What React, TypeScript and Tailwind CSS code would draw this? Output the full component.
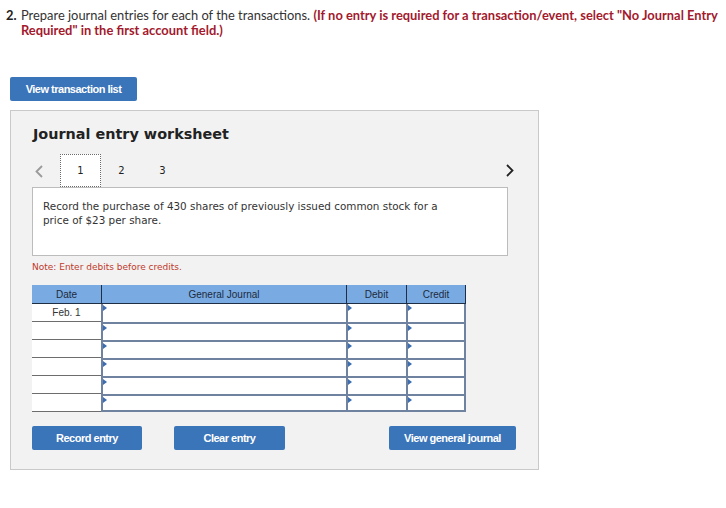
import React from "react";

const rows = ["Feb. 1", "", "", "", "", ""];

function Marker() {
  return (
    <span className="absolute left-0 top-[1px] w-0 h-0 border-y-[3px] border-y-transparent border-l-[4px] border-l-[#3b6db0]" />
  );
}

function Chevron({ dir, color }: { dir: "left" | "right"; color: string }) {
  return (
    <svg width="8" height="13" viewBox="0 0 8 13" fill="none" stroke={color} strokeWidth="1.8">
      {dir === "left" ? <polyline points="7,1 1.5,6.5 7,12" /> : <polyline points="1,1 6.5,6.5 1,12" />}
    </svg>
  );
}

export default function App() {
  return (
    <div className="w-[726px] h-[508px] bg-white overflow-hidden [font-family:'Lato',sans-serif]">
      {/* Instructions */}
      <div className="flex pt-[8px] pl-[6px] text-[12.9px] leading-[15px] text-[#333]">
        <span className="w-[15px] font-bold text-[#222]">2.</span>
        <p className="whitespace-nowrap">
          Prepare journal entries for each of the transactions.{" "}
          <span className="font-bold text-[#a3192d]">
            (If no entry is required for a transaction/event, select "No Journal Entry
            <br />
            Required" in the first account field.)
          </span>
        </p>
      </div>

      <button className="mt-[39px] ml-[10px] w-[127px] h-[24px] rounded-[2px] bg-[#3a74b9] text-white text-[11px] font-bold tracking-[-0.5px] [font-family:'Liberation_Sans',Arial,sans-serif]">
        View transaction list
      </button>

      {/* Worksheet panel */}
      <div className="mt-[9px] ml-[10px] w-[529px] h-[360px] border border-[#c9c9c9] bg-[#f2f2f2] [font-family:'DejaVu_Sans',Verdana,sans-serif]">
        <h2 className="pt-[13px] pl-[22px] text-[14.4px] leading-[20px] font-bold text-[#222]">
          Journal entry worksheet
        </h2>

        <div className="mt-[10px] ml-[21px] w-[476px]">
          <div className="flex items-end h-[33px]">
            <span className="w-[28px] pl-[3px] pb-[9px]">
              <Chevron dir="left" color="#9a9a9a" />
            </span>
            <div className="w-[41px] h-[33px] border border-dotted border-[#6b6b6b] bg-white flex items-center justify-center text-[10px] text-[#222]">
              1
            </div>
            <div className="w-[41px] h-[33px] flex items-center justify-center text-[10px] text-[#222]">2</div>
            <div className="w-[41px] h-[33px] flex items-center justify-center text-[10px] text-[#222]">3</div>
            <span className="ml-auto mr-[-6px] pb-[10px]">
              <Chevron dir="right" color="#222" />
            </span>
          </div>

          <div className="h-[69px] border border-[#bcbcbc] bg-white pt-[11px] pl-[10px] text-[10.4px] leading-[14px] text-[#333]">
            Record the purchase of 430 shares of previously issued common stock for a
            <br />
            price of $23 per share.
          </div>

          <p className="mt-[5px] text-[9px] leading-[12px] text-[#c0392b]">Note: Enter debits before credits.</p>

          {/* Journal table */}
          <div className="mt-[12px] w-[434px] [font-family:'Liberation_Sans',Arial,sans-serif]">
            <div className="grid grid-cols-[69px_245px_60px_60px] h-[19px] bg-[#79aae1] border-b border-[#1e2e44] text-[10px] text-[#1c2b40]">
              <div className="flex items-center justify-center">Date</div>
              <div className="flex items-center justify-center border-l border-[#1e2e44]">General Journal</div>
              <div className="flex items-center justify-center border-l border-[#1e2e44]">Debit</div>
              <div className="flex items-center justify-center border-l border-r border-[#1e2e44]">Credit</div>
            </div>
            {rows.map((d, i) => (
              <div key={i} className="grid grid-cols-[69px_245px_60px_60px] h-[18px]">
                <div className="bg-white border-b border-[#6d6d6d] flex items-center justify-center text-[10px] text-[#333]">
                  {d}
                </div>
                <div
                  className={`relative bg-white border-l-2 border-[#6f83a1] ${i > 0 ? "border-t-2" : ""} ${
                    i === rows.length - 1 ? "border-b-2" : ""
                  }`}
                >
                  <Marker />
                </div>
                <div
                  className={`relative bg-white border-l-2 border-[#6f83a1] ${i > 0 ? "border-t-2" : ""} ${
                    i === rows.length - 1 ? "border-b-2" : ""
                  }`}
                >
                  <Marker />
                </div>
                <div
                  className={`relative bg-white border-l-2 border-r-2 border-[#6f83a1] ${i > 0 ? "border-t-2" : ""} ${
                    i === rows.length - 1 ? "border-b-2" : ""
                  }`}
                >
                  <Marker />
                </div>
              </div>
            ))}
          </div>

          <div className="mt-[14px] flex [font-family:'Liberation_Sans',Arial,sans-serif] text-[11px] font-bold tracking-[-0.5px] text-white">
            <button className="shrink-0 w-[110px] h-[24px] rounded-[2px] bg-[#3a74b9]">Record entry</button>
            <button className="shrink-0 ml-[32px] w-[111px] h-[24px] rounded-[2px] bg-[#3a74b9]">Clear entry</button>
            <button className="shrink-0 ml-[104px] w-[127px] h-[24px] rounded-[2px] bg-[#3a74b9]">
              View general journal
            </button>
          </div>
        </div>
      </div>
    </div>
  );
}
